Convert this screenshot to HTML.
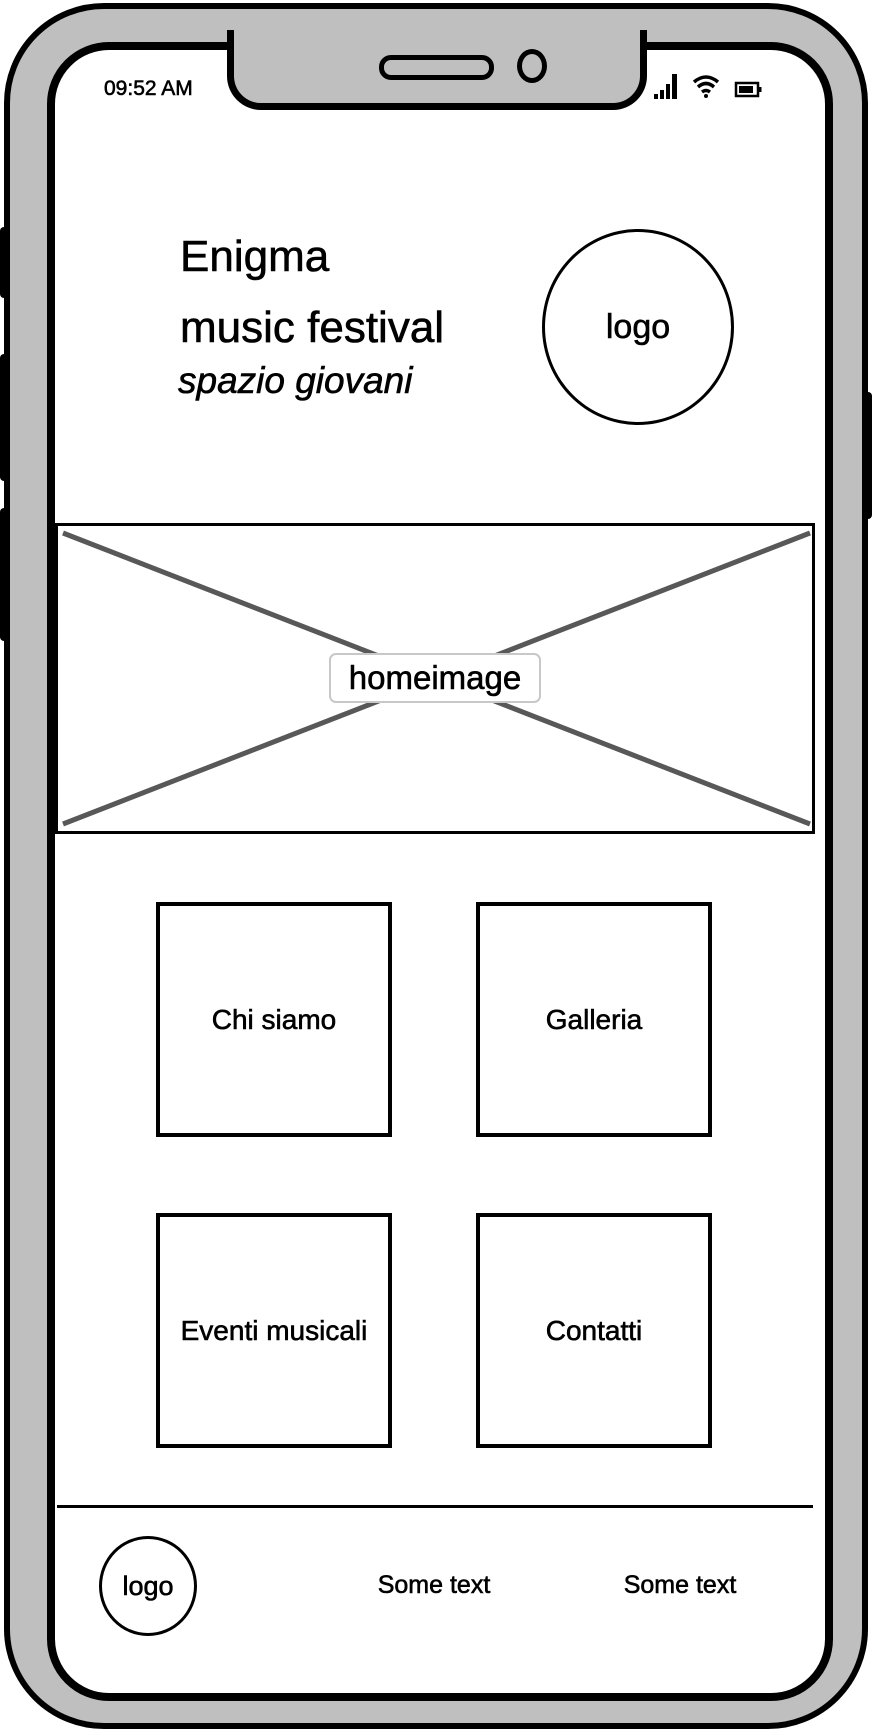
<!DOCTYPE html>
<html><head><meta charset="utf-8"><style>
html,body{margin:0;padding:0;background:#fff;}
body{width:872px;height:1734px;position:relative;overflow:hidden;font-family:"Liberation Sans",sans-serif;color:#000;-webkit-text-stroke:0.6px #000;}
.a{position:absolute;}
.tile{position:absolute;border:4px solid #000;background:#fff;box-sizing:border-box;display:flex;justify-content:center;font-size:28px;}
</style></head><body>
<div class="a" style="left:0;top:227px;width:12px;height:71px;background:#000;border-radius:4px"></div>
<div class="a" style="left:0;top:354px;width:12px;height:127px;background:#000;border-radius:4px"></div>
<div class="a" style="left:0;top:508px;width:12px;height:133px;background:#000;border-radius:4px"></div>
<div class="a" style="left:860px;top:392px;width:12px;height:127px;background:#000;border-radius:4px"></div>
<div class="a" style="left:4px;top:3px;width:852px;height:1714px;background:#bfbfbf;border:6px solid #000;border-radius:100px"></div>
<div class="a" style="left:47px;top:42px;width:770px;height:1643px;background:#fff;border:8px solid #000;border-radius:62px"></div>
<div class="a" style="left:227px;top:30px;width:406px;height:73px;background:#bfbfbf;border:7px solid #000;border-top:none;border-radius:0 0 34px 34px"></div>
<div class="a" style="left:379px;top:55px;width:105px;height:15px;border:5px solid #000;border-radius:12px;background:#bfbfbf"></div>
<div class="a" style="left:517px;top:49px;width:20px;height:24px;border:5px solid #000;border-radius:50%;background:#bfbfbf"></div>
<div class="a" style="left:104px;top:77px;font-size:21px;">09:52 AM</div>
<svg class="a" style="left:650px;top:70px" width="120" height="32">
<rect x="4" y="24" width="4" height="5"/><rect x="10" y="20" width="4" height="9"/><rect x="16" y="14" width="4" height="15"/><rect x="22" y="4" width="5" height="25"/>
<path d="M44 12 Q56 2 68 12" stroke="#000" stroke-width="3.5" fill="none"/><path d="M48 17 Q56 10 64 17" stroke="#000" stroke-width="3.5" fill="none"/><path d="M52 22 Q56 19 60 22" stroke="#000" stroke-width="3.5" fill="none"/><circle cx="56" cy="26" r="2"/>
<rect x="86" y="13" width="22" height="13" fill="none" stroke="#000" stroke-width="2.5"/><rect x="89" y="16" width="14" height="7"/><rect x="109" y="17" width="2.5" height="5"/>
</svg>
<div class="a" style="left:180px;top:232px;font-size:44px;">Enigma</div>
<div class="a" style="left:180px;top:303px;font-size:44px;">music festival</div>
<div class="a" style="left:178px;top:360px;font-size:37px;font-style:italic;">spazio giovani</div>
<div class="a" style="left:542px;top:229px;width:192px;height:196px;border:3px solid #000;border-radius:50%;box-sizing:border-box;display:flex;align-items:center;justify-content:center;font-size:34px;">logo</div>
<div class="a" style="left:55px;top:523px;width:760px;height:311px;border:3px solid #000;box-sizing:border-box;"></div>
<svg class="a" style="left:0;top:0" width="872" height="900"><path d="M63 533 L810 824 M810 533 L63 824" stroke="#585858" stroke-width="5"/></svg>
<div class="a" style="left:329px;top:653px;width:212px;height:50px;border:2px solid #c8c8c8;border-radius:7px;background:#fff;box-sizing:border-box;display:flex;align-items:center;justify-content:center;font-size:33px;">homeimage</div>
<div class="tile" style="left:156px;top:902px;width:236px;height:235px;padding-top:98px;">Chi siamo</div>
<div class="tile" style="left:476px;top:902px;width:236px;height:235px;padding-top:98px;">Galleria</div>
<div class="tile" style="left:156px;top:1213px;width:236px;height:235px;padding-top:98px;">Eventi musicali</div>
<div class="tile" style="left:476px;top:1213px;width:236px;height:235px;padding-top:98px;">Contatti</div>
<div class="a" style="left:57px;top:1505px;width:756px;height:3px;background:#000"></div>
<div class="a" style="left:99px;top:1536px;width:98px;height:100px;border:3px solid #000;border-radius:50%;box-sizing:border-box;display:flex;align-items:center;justify-content:center;font-size:27px;">logo</div>
<div class="a" style="left:334px;top:1571px;width:200px;text-align:center;font-size:25px;">Some text</div>
<div class="a" style="left:580px;top:1571px;width:200px;text-align:center;font-size:25px;">Some text</div>
</body></html>
